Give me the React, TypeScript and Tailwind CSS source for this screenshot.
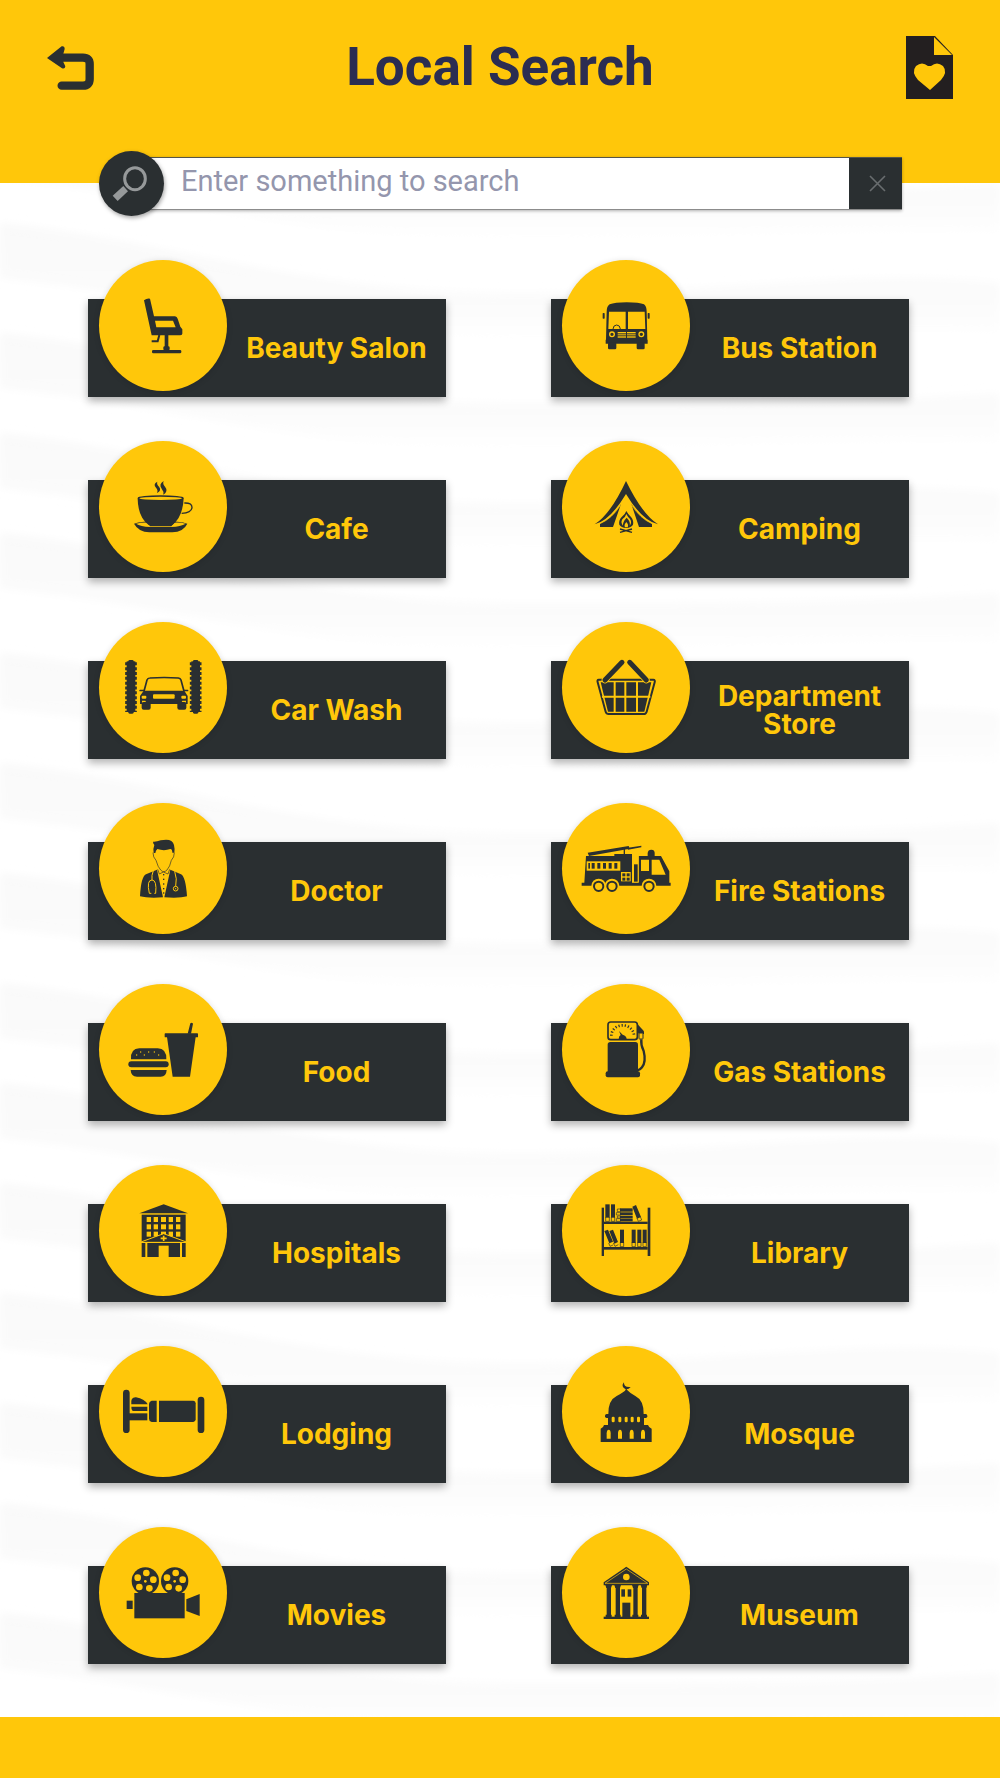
import React from "react";

const D = "#2a2f31";
const Y = "#ffc70a";

type Category = { label: string; box: string; icon: React.ReactNode };

const rects = (items: number[][], fill: string, rx = 0) =>
  items.map(([x, y, w, h], i) => <rect key={i} x={x} y={y} width={w} height={h} rx={rx} fill={fill} />);

const salon = (
  <g fill={D}>
    <path d="M190 150 Q199 143 208 145 L220 198 H283 Q289 199 291 205 L299 229 L305 237 V250 Q304 255 298 255 H213 Z" />
    <path d="M223 211 H277 L285 231 H227 Z" fill={Y} />
    <rect x="252" y="254" width="11" height="38" />
    <rect x="248" y="288" width="19" height="12" rx="4" />
    <rect x="214" y="299" width="88" height="10" rx="4" />
    <path d="M236 254 L231 273 H213" fill="none" stroke={D} strokeWidth="6" />
  </g>
);

const bus = (
  <g fill={D}>
    <path d="M198 184 Q198 168 207 162 Q222 156 258 156 Q296 156 310 162 Q318 168 318 184 L320 268 H321 V280 H195 V268 H196 Z" />
    <path d="M205 184 H255 V236 H203 Z M262 184 H312 L314 236 H262 Z" fill={Y} />
    <path d="M217 236 Q218 224 228 224 Q238 224 239 236" fill="none" stroke={D} strokeWidth="3" />
    <circle cx="214" cy="252" r="7" fill="none" stroke={Y} strokeWidth="4" />
    <circle cx="302" cy="252" r="7" fill="none" stroke={Y} strokeWidth="4" />
    {rects([[231, 245, 25, 4], [231, 252, 25, 3], [231, 258, 25, 4], [259, 245, 26, 4], [259, 252, 26, 3], [259, 258, 26, 4]], Y)}
    {rects([[186, 188, 6, 17], [321, 188, 6, 17]], D, 2)}
    <rect x="202" y="276" width="25" height="21" rx="4" />
    <rect x="288" y="276" width="24" height="21" rx="4" />
  </g>
);

const cafe = (
  <g fill={D}>
    <path d="M160 281 Q180 274 240 274 Q300 274 320 281 Q308 306 275 307 H206 Q174 306 160 281 Z" />
    <path d="M166 281 Q185 277 200 278 L208 289 H272 L281 278 Q300 277 315 281 Q300 290 272 291 H208 Q180 290 166 281Z" fill={Y} />
    <path d="M171 204 Q171 260 204 285 H275 Q307 260 309 204 Z" />
    <ellipse cx="240" cy="204" rx="69" ry="8" />
    <ellipse cx="240" cy="205" rx="64" ry="5" fill={Y} />
    <path d="M311 219 Q334 218 334 232 Q333 249 303 250" fill="none" stroke={D} strokeWidth="4" />
    <path d="M230 155 Q216 162 226 173 Q233 180 229 189 Q244 181 235 170 Q227 162 230 155 Z M249 153 Q233 163 243 176 Q250 184 248 194 Q264 183 253 170 Q245 162 249 153 Z" />
  </g>
);

const carWash = (
  <g fill={D}>
    {[151, 345].map((x) => (
      <g key={x}>
        <rect x={x - 13} y="694" width="26" height="152" />
        <path d={`M${x} 697 V846`} stroke={D} strokeWidth="35" strokeDasharray="9 5.5" />
        <rect x={x - 8} y="690" width="16" height="161" rx="4" />
      </g>
    ))}
    <path d="M190 784 L199 750 Q201 744 208 744 Q250 741 293 744 Q299 745 301 750 L310 784" fill="none" stroke={D} strokeWidth="5" />
    <path d="M189 782 H311 L321 798 V822 H178 V798 Z" />
    {rects([[183, 797, 14, 9], [302, 797, 14, 9], [217, 793, 65, 13]], Y, 3)}
    <path d="M184 812 H194 L197 818 H184 Z M305 812 H316 V818 H302 Z" fill={Y} />
    {rects([[183, 816, 27, 23], [290, 816, 27, 23]], D, 6)}
    {rects([[176, 779, 16, 5], [308, 779, 15, 5]], D, 2)}
  </g>
);

const camping = (
  <g fill={D}>
    <path d="M256 153 Q304 252 352 283 Q304 272 256 192 Q208 272 162 283 Q210 252 256 153 Z" />
    <path d="M178 281 Q216 265 241 222 L217 291 H178 Z M334 281 Q297 265 272 222 L295 291 H334 Z" />
    <path d="M178 281 Q215 265 239 226 M334 281 Q298 265 273 226" fill="none" stroke={Y} strokeWidth="2" />
    <path d="M257 243 Q263 254 271 261 Q280 272 277 284 Q272 293 257 294 Q241 293 236 284 Q233 272 243 261 Q254 252 257 243 Z" />
    <path d="M257 252 Q262 262 268 267 Q275 278 267 287 Q270 275 258 263 Q246 275 247 287 Q239 278 245 268 Q255 260 257 252 Z" fill={Y} />
    <path d="M257 276 Q265 285 261 292 H253 Q249 285 257 276 Z" fill={Y} />
    <path d="M238 297 L274 307 M274 297 L238 307" stroke={D} strokeWidth="4" />
  </g>
);

const basket = (
  <g fill={D}>
    <path d="M174 749 H338 Q344 749 342 757 L318 845 Q316 852 309 852 H204 Q197 852 195 845 L171 757 Q169 749 174 749 Z" fill="none" stroke={D} strokeWidth="6" />
    <path d="M180 757 H332 L311 845 H202 Z" />
    <path d="M222 754 V848 M254 754 V848 M289 754 V848 M184 800 H329" stroke={Y} strokeWidth="6" />
    <path d="M193 750 L244 697 M317 750 L267 697" stroke={Y} strokeWidth="20" strokeLinecap="round" />
    <path d="M193 750 L244 697 M317 750 L267 697" stroke={D} strokeWidth="15" strokeLinecap="round" />
  </g>
);

const doctor = (
  <g fill={D}>
    <path d="M217 141 Q227 142 240 137 Q262 132 272 139 Q284 147 281 174 H275 Q275 164 269 163 Q250 170 230 163 Q225 168 224 175 H219 Q217 160 221 151 Q217 147 217 141 Z" />
    <path d="M217 174 Q217 188 226 197 Q232 218 240 226 Q249 236 259 226 Q268 216 272 197 Q281 188 281 174" fill="none" stroke={D} strokeWidth="2" />
    <path d="M229 225 L247 308 Q202 311 178 305 Q181 246 196 239 Z M269 225 L251 308 Q298 311 319 305 Q315 246 301 239 Z" />
    <path d="M231 224 L236 238 L248 232 L262 238 L267 224" fill="none" stroke={D} strokeWidth="2" />
    {rects([[247, 238, 4, 4], [247, 252, 4, 4], [247, 266, 4, 4], [247, 280, 4, 4], [247, 293, 4, 4]], D)}
    <path d="M218 228 Q212 242 214 256 M212 296 H206 Q197 256 214 256 Q229 256 225 296 H221 M282 230 Q290 252 285 275" fill="none" stroke={Y} strokeWidth="3" />
    <circle cx="285" cy="282" r="7" fill="none" stroke={Y} strokeWidth="3" />
    <circle cx="285" cy="282" r="2" fill={Y} />
  </g>
);

const food = (
  <g fill={D}>
    <path d="M151 795 Q149 763 176 762 H231 Q258 763 257 795 Z" />
    {rects([[166, 780, 4, 4], [178, 771, 4, 4], [189, 780, 4, 4], [202, 771, 4, 4], [219, 771, 4, 4], [232, 780, 4, 4]], Y, 2)}
    <rect x="143" y="801" width="121" height="18" rx="9" />
    <path d="M150 827 H258 Q257 847 240 847 H169 Q151 847 150 827 Z" />
    <rect x="252" y="717" width="100" height="12" rx="2" />
    <path d="M259 728 H345 L328 847 H276 Z M321 718 L329 687 Q334 683 337 688 L331 718 Z" />
  </g>
);

const fireTruck = (
  <g fill={D}>
    <path d="M136 184 H221 V178 H274 V264 H294 V184 H361 L386 230 V264 H390 V273 H123 V264 H131 Z" />
    <rect x="275" y="176" width="19" height="87" fill={Y} />
    <rect x="280" y="209" width="11" height="52" />
    <rect x="138" y="200" width="101" height="28" fill={Y} />
    {rects([[143, 205, 5, 17], [153, 205, 9, 17], [170, 205, 9, 17], [187, 205, 9, 17], [204, 205, 9, 17], [221, 205, 9, 17]], D)}
    <rect x="241" y="232" width="29" height="28" fill={Y} />
    {rects([[245, 236, 9, 9], [258, 236, 9, 9], [245, 249, 9, 9], [258, 249, 9, 9]], D)}
    <path d="M301 195 H325 V229 H301 Z M333 195 H356 L375 240 H333 Z" fill={Y} />
    <path d="M321 184 V175 Q322 165 332 165 Q342 165 342 175 V184 Z" />
    {[174, 214, 325].map((x) => (
      <g key={x}>
        <circle cx={x} cy="274" r="22" fill={Y} />
        <circle cx={x} cy="275" r="14" fill={Y} stroke={D} strokeWidth="6" />
      </g>
    ))}
    <path d="M141 174 L264 154 L267 162 L145 184 Z M262 159 L302 153 V158 L262 165 Z" />
    <rect x="249" y="160" width="4" height="20" />
  </g>
);

const gas = (
  <g fill={D}>
    <rect x="202" y="683" width="88" height="53" rx="8" fill="none" stroke={D} strokeWidth="5" />
    <path d="M212 724 A34 31 0 0 1 280 724" fill="none" stroke={D} strokeWidth="8" strokeDasharray="3.5 6" />
    <path d="M234 735 Q234 725 240 722 L235 710 L246 721 Q258 724 258 735 Z" />
    <rect x="201" y="743" width="91" height="94" rx="8" />
    <rect x="195" y="831" width="103" height="18" rx="6" />
    <path d="M291 690 L310 711 V719 H295 L290 713 Z" />
    <rect x="295" y="716" width="12" height="18" rx="2" fill={Y} stroke={D} strokeWidth="3" />
    <path d="M302 735 Q300 752 309 770 Q317 802 304 819 Q298 827 291 828" fill="none" stroke={D} strokeWidth="7" />
  </g>
);

const hospital = (
  <g fill={D}>
    <path d="M176 178 L249 151 L322 178 Z" />
    <rect x="183" y="182" width="132" height="127" />
    {[189, 211, 233].map((y) => (
      <g key={y}>{rects([[198, y, 13, 15], [219, y, 13, 15], [241, y, 15, 15], [264, y, 13, 15], [286, y, 13, 15]], Y)}</g>
    ))}
    <path d="M178 265 L249 239 L320 265 Z" stroke={Y} strokeWidth="3" />
    <path d="M240 253 H258 M249 245 V261" stroke={Y} strokeWidth="5" />
    <rect x="178" y="264" width="142" height="3" fill={Y} />
    {rects([[194, 266, 6, 43], [298, 266, 6, 43], [234, 275, 30, 34]], Y)}
  </g>
);

const bed = (
  <g fill={D}>
    {rects([[127, 707, 20, 130], [351, 728, 20, 109]], D, 10)}
    <rect x="140" y="778" width="60" height="21" />
    <path d="M152 751 Q149 729 166 730 Q191 734 201 751 Z" />
    <path d="M152 758 H200 V771 H158 Q152 770 152 758 Z" />
    <path d="M213 740 H228 V804 H213 Q205 802 205 794 V750 Q205 742 213 740 Z" />
    <path d="M235 740 H338 Q345 741 345 748 V796 Q345 803 338 804 H235 Z" />
  </g>
);

const library = (
  <g fill={D}>
    {rects([[183, 161, 7, 145], [321, 161, 8, 145], [190, 203, 131, 7], [190, 279, 131, 8]], D)}
    {rects([[194, 151, 13, 40], [211, 151, 12, 40], [238, 227, 12, 40], [273, 227, 12, 40], [290, 227, 12, 40], [306, 227, 12, 40]], D)}
    <g fill="none" stroke={D} strokeWidth="2">
      <path d="M195 189 V202 H206 V189 M212 189 V202 H222 V189 M239 265 V278 H249 V265 M274 265 V278 H284 V265 M291 265 V278 H301 V265 M307 265 V278 H317 V265" />
      <path d="M240 165 H230 V173 H240 M240 176 H227 V183 H240 M240 186 H230 V192 H240 M240 194 H227 V202 H240" />
      <path d="M289 192 L293 202 L303 198 L299 188 M204 267 L208 277 L217 273 M218 267 L223 277 L233 272" />
    </g>
    {rects([[238, 163, 38, 10], [238, 175, 38, 8], [238, 185, 38, 8], [238, 194, 38, 8]], D)}
    <path d="M275 158 L286 153 L301 189 L289 194 Z M191 231 L202 227 L217 263 L206 268 Z M206 231 L217 227 L232 264 L221 269 Z" />
  </g>
);

const mosque = (
  <g fill={D}>
    <path d="M203 781 Q202 739 228 726 Q249 716 257 706 Q266 716 284 726 Q310 739 309 781 Z" />
    <path d="M250 685 Q248 701 270 699 Q264 706 258 706 V710 H255 V706 Q239 697 250 685 Z" />
    <rect x="193" y="780" width="127" height="12" rx="5" />
    <rect x="202" y="790" width="108" height="28" />
    <path d="M180 824 Q188 822 190 813 H322 Q325 822 333 824 V864 H180 Z" />
    {rects([[213, 788, 9, 17], [233, 788, 9, 17], [252, 788, 9, 17], [270, 788, 9, 17], [289, 788, 9, 17]], Y, 4)}
    {[198, 232, 267, 301].map((x) => (
      <path key={x} d={`M${x} 854 V838 Q${x} 828 ${x + 6} 827 Q${x + 12} 828 ${x + 12} 838 V854 Z`} fill={Y} />
    ))}
  </g>
);

const movies = (
  <g fill={D}>
    {[194, 282].map((x) => (
      <g key={x}>
        <circle cx={x} cy="201" r="41" />
        {[[-23, -10], [3, -24], [24, -4], [12, 22], [-18, 18]].map(([dx, dy]) => (
          <circle key={dx} cx={x + dx} cy={201 + dy} r="10" fill={Y} />
        ))}
        <circle cx={x} cy="202" r="4" fill={Y} />
      </g>
    ))}
    <rect x="161" y="237" width="151" height="76" />
    <rect x="138" y="260" width="18" height="25" />
    <path d="M317 256 L357 240 V306 L317 291 Z" />
  </g>
);

const museum = (
  <g fill={D}>
    <path d="M189 205 L257 158 L325 205 V214 H189 Z" />
    <path d="M193 208 L257 165 L321 208 Z" fill="none" stroke={Y} strokeWidth="2" />
    <circle cx="257" cy="189" r="10" fill={Y} />
    {[204, 231, 284, 310].map((x) => (
      <g key={x}>
        <rect x={x - 6} y="213" width="13" height="96" />
        <path d={`M${x - 10} 213 H${x + 10} L${x + 7} 222 H${x - 7} Z M${x - 9} 309 V302 H${x + 9} V309 Z`} />
      </g>
    ))}
    <rect x="189" y="308" width="136" height="7" />
    {rects([[242, 226, 11, 22], [261, 226, 11, 22], [245, 266, 24, 44]], D)}
  </g>
);

const categories: Category[] = [
  { label: "Beauty Salon", box: "55 29 384 393", icon: salon },
  { label: "Bus Station", box: "64 29 384 393", icon: bus },
  { label: "Cafe", box: "55 33 384 393", icon: cafe },
  { label: "Camping", box: "64 33 384 393", icon: camping },
  { label: "Car Wash", box: "55 576 384 393", icon: carWash },
  { label: "Department Store", box: "64 576 384 393", icon: basket },
  { label: "Doctor", box: "55 25 384 393", icon: doctor },
  { label: "Fire Stations", box: "64 25 384 393", icon: fireTruck },
  { label: "Food", box: "55 569 384 393", icon: food },
  { label: "Gas Stations", box: "64 569 384 393", icon: gas },
  { label: "Hospitals", box: "55 33 384 393", icon: hospital },
  { label: "Library", box: "64 33 384 393", icon: library },
  { label: "Lodging", box: "55 576 384 393", icon: bed },
  { label: "Mosque", box: "64 576 384 393", icon: mosque },
  { label: "Movies", box: "55 39 384 393", icon: movies },
  { label: "Museum", box: "64 39 384 393", icon: museum },
];

function CategoryButton({ label, box, icon }: Category) {
  return (
    <button
      type="button"
      className="flex h-[98px] items-center bg-[#2a2f31] pl-[11px] shadow-[0_4px_8px_rgba(0,0,0,0.3)]"
    >
      <span className="mb-[6px] h-[131px] w-32 shrink-0 self-end rounded-[50%] bg-[#ffc70a] shadow-[0_1px_6px_rgba(0,0,0,0.14)]">
        <svg viewBox={box} className="h-full w-full" aria-hidden="true">
          {icon}
        </svg>
      </span>
      <span className="flex-1 px-3 text-center font-['Inter',sans-serif] text-[28px] leading-7 font-bold text-[#ffc70a]">
        {label}
      </span>
    </button>
  );
}

const waves = [-60, 40, 150, 250, 350, 470, 580, 690, 800, 900, 1000, 1110, 1220, 1320, 1430];

function Waves() {
  return (
    <svg
      className="absolute inset-0 h-full w-full"
      viewBox="0 0 1000 1534"
      preserveAspectRatio="none"
      aria-hidden="true"
    >
      <defs>
        <linearGradient id="wave" x1="0" y1="0" x2="0" y2="1">
          <stop offset="0" stopColor="#f9f9f9" />
          <stop offset="0.6" stopColor="#fbfbfb" />
          <stop offset="1" stopColor="#ffffff" />
        </linearGradient>
        <filter id="soften">
          <feGaussianBlur stdDeviation="4" />
        </filter>
      </defs>
      <g filter="url(#soften)">
        {waves.map((y, i) => (
          <path
            key={y}
            fill="url(#wave)"
            d={`M0 ${y} C180 ${y + 20} 300 ${y + 70} 520 ${y + 70} S850 ${y + (i % 2 ? 45 : 70)} 1000 ${y + 60} V${y + 110} C800 ${y + 105} 650 ${y + 125} 480 ${y + 120} S160 ${y + 70} 0 ${y + 55} Z`}
          />
        ))}
      </g>
    </svg>
  );
}

export default function App() {
  return (
    <div className="flex min-h-screen flex-col bg-white font-['Roboto',sans-serif]">
      <header className="relative z-10 h-[183px] bg-[#ffc70a]">
        <div className="flex h-[135px] items-center justify-between px-[47px]">
          <button type="button" aria-label="Back">
            <svg viewBox="50 47 141 132" className="h-11 w-[47px]">
              <path
                d="M92 82 H158 Q178 82 178 101 V146 Q178 166 158 166 H94"
                fill="none"
                stroke={D}
                strokeWidth="25"
                strokeLinecap="round"
              />
              <path d="M50 83 L94 48 Q103 46 103 56 L99 70 V95 L105 108 Q104 117 95 114 Z" fill={D} />
            </svg>
          </button>
          <h1 className="text-[53px] font-bold text-[#2b2d52]">Local Search</h1>
          <button type="button" aria-label="Saved places">
            <svg viewBox="0 0 47 63" className="h-[63px] w-[47px]">
              <path d="M0 0 H29 L47 19 V63 H0 Z" fill="#231f20" />
              <path d="M28 1 L46 19 H28 Z" fill={Y} />
              <path d="M24 54 L12 44 Q5 36 10 30 Q16 25 22 30 H25 Q31 25 37 30 Q42 36 35 44 Z" fill={Y} />
            </svg>
          </button>
        </div>
        <form className="mt-4 mr-[98px] ml-[99px] flex items-center" onSubmit={(e) => e.preventDefault()}>
          <button
            type="submit"
            aria-label="Search"
            className="z-10 flex h-[65px] w-[65px] shrink-0 items-center justify-center rounded-full bg-[#2a2f31] shadow-[1px_2px_4px_rgba(0,0,0,0.35)]"
          >
            <svg viewBox="208 361 195 195" className="h-full w-full" aria-hidden="true">
              <ellipse cx="316" cy="444" rx="31" ry="33" fill="none" stroke="#96999a" strokeWidth="9" />
              <path d="M281 466 L295 482 L264 511 L249 495 Z" fill="#96999a" />
            </svg>
          </button>
          <div className="-ml-4 flex h-[53px] flex-1 border-t border-b border-t-[#55564a] border-b-[#8c8c8c] bg-white shadow-[0_1px_3px_rgba(0,0,0,0.3)]">
            <input
              type="text"
              aria-label="Search"
              placeholder="Enter something to search"
              className="min-w-0 flex-1 pr-4 pb-1 pl-[33px] text-[29px] text-[#2b2d52] outline-none placeholder:text-[#9496ad]"
            />
            <button
              type="button"
              aria-label="Clear"
              className="flex w-[53px] items-center justify-center bg-[#2a2f31] pl-1"
            >
              <svg viewBox="0 0 17 17" className="h-[17px] w-[17px]" aria-hidden="true">
                <path d="M1 1 L16 16 M16 1 L1 16" stroke="#696d6f" strokeWidth="1.6" />
              </svg>
            </button>
          </div>
        </form>
      </header>
      <main className="relative flex-1 pt-[116px] pr-[91px] pb-[52px] pl-[88px]">
        <Waves />
        <div className="relative grid grid-cols-2 gap-x-[105px] gap-y-[83px]">
          {categories.map((c) => (
            <CategoryButton key={c.label} {...c} />
          ))}
        </div>
      </main>
      <footer className="relative h-[61px] bg-[#ffc70a]" />
    </div>
  );
}
